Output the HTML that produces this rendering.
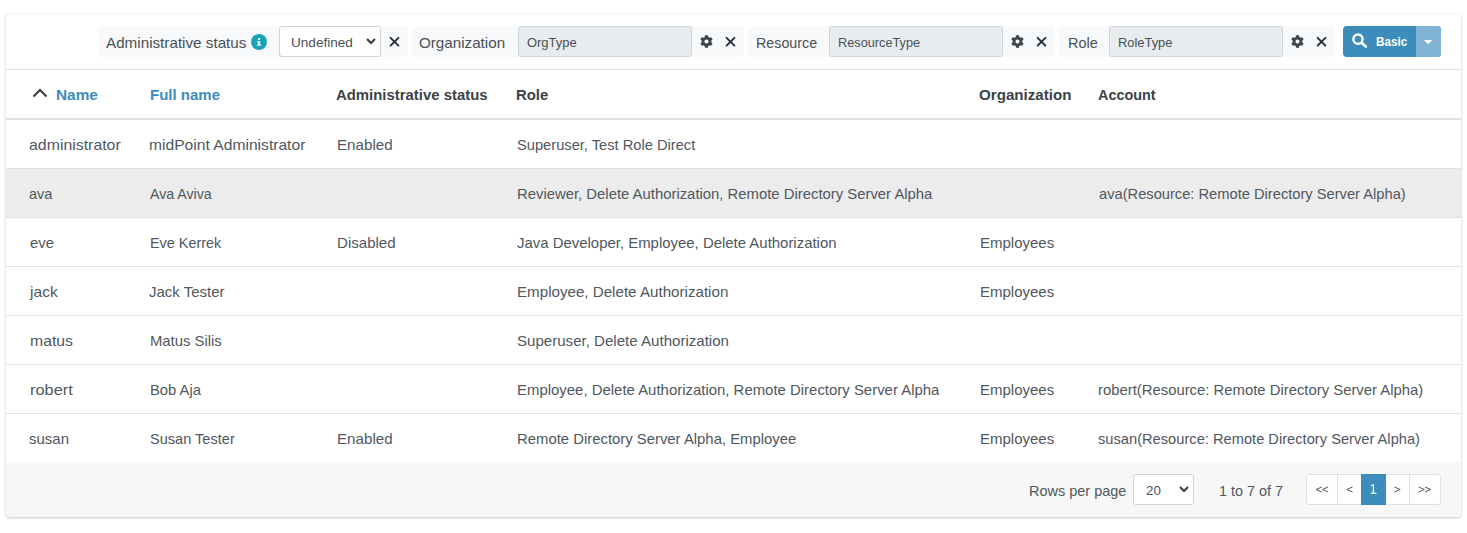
<!DOCTYPE html>
<html><head><meta charset="utf-8">
<style>
*{box-sizing:border-box;margin:0;padding:0}
html,body{width:1467px;height:533px;overflow:hidden;background:#fff;font-family:"Liberation Sans",sans-serif;}
.a{position:absolute;white-space:nowrap;transform-origin:0 0}
#card{position:absolute;left:6px;top:14px;width:1455px;height:503px;background:#fff;border-radius:4px;box-shadow:0 0 1px rgba(0,0,0,.125),0 1px 3px rgba(0,0,0,.2);overflow:hidden}
.fbox{position:absolute;top:26px;height:31px;background:#f8f9fa;border-radius:4px}
.lbl{font-size:15px;color:#495057;line-height:20px;top:32px}
.inp{position:absolute;top:26px;height:31px;background:#e9ecef;border:1px solid #ced4da;border-radius:3px}
.inpt{font-size:13px;color:#495057;line-height:18px;top:33px}
.hdr{font-size:15px;font-weight:bold;color:#3b4248;line-height:20px;top:84px}
.lnk{color:#3c8dbc}
.hl{position:absolute;left:6px;width:1455px;height:1px;background:#dee2e6}
.cell{font-size:15px;color:#50575e;line-height:20px}
svg{position:absolute;overflow:visible}
.btn{font-size:13.5px;font-weight:bold;color:#fff;line-height:20px}
</style></head><body>
<div id="card"></div>
<!-- filter bar -->
<div class="fbox" style="left:99px;width:309px"></div>
<svg style="left:251px;top:34px" width="16" height="16" viewBox="0 0 16 16"><circle cx="8" cy="8" r="8" fill="#17a2b8"/><rect x="7" y="4.1" width="2.2" height="1.9" rx="0.5" fill="#fff"/><path d="M6 7.2H9.2V10.5H10.2V11.8H5.9V10.5H7.3V8.5H6Z" fill="#fff"/></svg>
<div class="a" style="left:279px;top:26px;width:102px;height:31px;background:#fff;border:1px solid #ced4da;border-radius:3px"></div>
<svg style="left:366px;top:38px" width="10" height="7" viewBox="0 0 10 7"><path d="M1 1l4 4 4-4" fill="none" stroke="#3b4148" stroke-width="2.2"/></svg>
<svg style="left:389px;top:36px" width="11" height="11" viewBox="0 0 11 11"><path d="M1.6 1.8L9.4 9.6M9.4 1.8L1.6 9.6" fill="none" stroke="#1f2d3d" stroke-width="1.9" stroke-linecap="round"/></svg>

<div class="fbox" style="left:412px;width:332px"></div>
<div class="inp" style="left:518px;width:174px"></div>
<svg class="gear" style="left:700px;top:34.7px" width="13" height="13" viewBox="0 0 512 512"><path fill="#40464c" d="M487.4 315.7l-42.6-24.6c4.3-23.2 4.3-47 0-70.2l42.6-24.6c4.9-2.8 7.1-8.6 5.5-14-11.1-35.6-30-67.8-54.7-94.6-3.8-4.1-10-5.1-14.8-2.3L380.8 110c-17.9-15.4-38.5-27.3-60.8-35.1V25.8c0-5.6-3.9-10.5-9.4-11.7-36.7-8.2-74.3-7.8-109.2 0-5.5 1.2-9.4 6.1-9.4 11.7V75c-22.2 7.9-42.8 19.8-60.8 35.1L88.7 85.5c-4.9-2.8-11-1.9-14.8 2.3-24.7 26.7-43.6 58.9-54.7 94.6-1.7 5.4.6 11.2 5.5 14L67.3 221c-4.3 23.2-4.3 47 0 70.2l-42.6 24.6c-4.9 2.8-7.1 8.6-5.5 14 11.1 35.6 30 67.8 54.7 94.6 3.8 4.1 10 5.1 14.8 2.3l42.6-24.6c17.9 15.4 38.5 27.3 60.8 35.1v49.2c0 5.6 3.9 10.5 9.4 11.7 36.7 8.2 74.3 7.8 109.2 0 5.5-1.2 9.4-6.1 9.4-11.7v-49.2c22.2-7.9 42.8-19.8 60.8-35.1l42.6 24.6c4.9 2.8 11 1.9 14.8-2.3 24.7-26.7 43.6-58.9 54.7-94.6 1.5-5.5-.7-11.3-5.6-14.1zM256 336c-44.1 0-80-35.9-80-80s35.9-80 80-80 80 35.9 80 80-35.9 80-80 80z"/></svg>
<svg style="left:725px;top:36px" width="11" height="11" viewBox="0 0 11 11"><path d="M1.6 1.8L9.4 9.6M9.4 1.8L1.6 9.6" fill="none" stroke="#1f2d3d" stroke-width="1.9" stroke-linecap="round"/></svg>

<div class="fbox" style="left:748px;width:307px"></div>
<div class="inp" style="left:829px;width:174px"></div>
<svg style="left:1011px;top:34.7px" width="13" height="13" viewBox="0 0 512 512"><path fill="#40464c" d="M487.4 315.7l-42.6-24.6c4.3-23.2 4.3-47 0-70.2l42.6-24.6c4.9-2.8 7.1-8.6 5.5-14-11.1-35.6-30-67.8-54.7-94.6-3.8-4.1-10-5.1-14.8-2.3L380.8 110c-17.9-15.4-38.5-27.3-60.8-35.1V25.8c0-5.6-3.9-10.5-9.4-11.7-36.7-8.2-74.3-7.8-109.2 0-5.5 1.2-9.4 6.1-9.4 11.7V75c-22.2 7.9-42.8 19.8-60.8 35.1L88.7 85.5c-4.9-2.8-11-1.9-14.8 2.3-24.7 26.7-43.6 58.9-54.7 94.6-1.7 5.4.6 11.2 5.5 14L67.3 221c-4.3 23.2-4.3 47 0 70.2l-42.6 24.6c-4.9 2.8-7.1 8.6-5.5 14 11.1 35.6 30 67.8 54.7 94.6 3.8 4.1 10 5.1 14.8 2.3l42.6-24.6c17.9 15.4 38.5 27.3 60.8 35.1v49.2c0 5.6 3.9 10.5 9.4 11.7 36.7 8.2 74.3 7.8 109.2 0 5.5-1.2 9.4-6.1 9.4-11.7v-49.2c22.2-7.9 42.8-19.8 60.8-35.1l42.6 24.6c4.9 2.8 11 1.9 14.8-2.3 24.7-26.7 43.6-58.9 54.7-94.6 1.5-5.5-.7-11.3-5.6-14.1zM256 336c-44.1 0-80-35.9-80-80s35.9-80 80-80 80 35.9 80 80-35.9 80-80 80z"/></svg>
<svg style="left:1036px;top:36px" width="11" height="11" viewBox="0 0 11 11"><path d="M1.6 1.8L9.4 9.6M9.4 1.8L1.6 9.6" fill="none" stroke="#1f2d3d" stroke-width="1.9" stroke-linecap="round"/></svg>

<div class="fbox" style="left:1059px;width:276px"></div>
<div class="inp" style="left:1109px;width:174px"></div>
<svg style="left:1291px;top:34.7px" width="13" height="13" viewBox="0 0 512 512"><path fill="#40464c" d="M487.4 315.7l-42.6-24.6c4.3-23.2 4.3-47 0-70.2l42.6-24.6c4.9-2.8 7.1-8.6 5.5-14-11.1-35.6-30-67.8-54.7-94.6-3.8-4.1-10-5.1-14.8-2.3L380.8 110c-17.9-15.4-38.5-27.3-60.8-35.1V25.8c0-5.6-3.9-10.5-9.4-11.7-36.7-8.2-74.3-7.8-109.2 0-5.5 1.2-9.4 6.1-9.4 11.7V75c-22.2 7.9-42.8 19.8-60.8 35.1L88.7 85.5c-4.9-2.8-11-1.9-14.8 2.3-24.7 26.7-43.6 58.9-54.7 94.6-1.7 5.4.6 11.2 5.5 14L67.3 221c-4.3 23.2-4.3 47 0 70.2l-42.6 24.6c-4.9 2.8-7.1 8.6-5.5 14 11.1 35.6 30 67.8 54.7 94.6 3.8 4.1 10 5.1 14.8 2.3l42.6-24.6c17.9 15.4 38.5 27.3 60.8 35.1v49.2c0 5.6 3.9 10.5 9.4 11.7 36.7 8.2 74.3 7.8 109.2 0 5.5-1.2 9.4-6.1 9.4-11.7v-49.2c22.2-7.9 42.8-19.8 60.8-35.1l42.6 24.6c4.9 2.8 11 1.9 14.8-2.3 24.7-26.7 43.6-58.9 54.7-94.6 1.5-5.5-.7-11.3-5.6-14.1zM256 336c-44.1 0-80-35.9-80-80s35.9-80 80-80 80 35.9 80 80-35.9 80-80 80z"/></svg>
<svg style="left:1316px;top:36px" width="11" height="11" viewBox="0 0 11 11"><path d="M1.6 1.8L9.4 9.6M9.4 1.8L1.6 9.6" fill="none" stroke="#1f2d3d" stroke-width="1.9" stroke-linecap="round"/></svg>

<div class="a" style="left:1343px;top:26px;width:98px;height:31px;background:#3c8dbc;border-radius:4px;overflow:hidden"><div style="position:absolute;left:73px;top:0;width:25px;height:31px;background:#80b3d4"></div></div>
<svg style="left:1352px;top:33px" width="16" height="15" viewBox="0 0 16 15"><circle cx="6" cy="6.2" r="4.6" fill="none" stroke="#fff" stroke-width="2.5"/><path d="M9.5 9.8L13.8 13.6" stroke="#fff" stroke-width="2.7" stroke-linecap="round"/></svg>
<svg style="left:1423.8px;top:39.8px" width="9" height="5" viewBox="0 0 9 5"><path d="M0 0H8.2L4.1 4.2Z" fill="#fff"/></svg>

<div class="hl" style="top:69px;background:#dfdfdf"></div>

<!-- header -->
<svg style="left:32px;top:88px" width="16" height="10" viewBox="0 0 16 10"><path d="M1.5 8.5l6.5-6.5 6.5 6.5" fill="none" stroke="#343a40" stroke-width="2"/></svg>
<div class="hl" style="top:118px;height:2px"></div>

<!-- rows -->
<div class="a" style="left:6px;top:169px;width:1455px;height:48px;background:#ececec"></div>
<div class="hl" style="top:168px"></div>
<div class="hl" style="top:217px"></div>
<div class="hl" style="top:266px"></div>
<div class="hl" style="top:315px"></div>
<div class="hl" style="top:364px"></div>
<div class="hl" style="top:413px"></div>


<!-- footer -->
<div class="a" style="left:6px;top:462px;width:1455px;height:55px;background:#f7f7f7;border-radius:0 0 4px 4px"></div>
<div class="a" style="left:1133px;top:474px;width:61px;height:31px;background:#fff;border:1px solid #ced4da;border-radius:3px"></div>
<svg style="left:1179px;top:486px" width="10" height="7" viewBox="0 0 10 7"><path d="M1 1l4 4 4-4" fill="none" stroke="#3b4148" stroke-width="2.2"/></svg>
<div class="a" style="left:1306px;top:474px;width:135px;height:31px;background:#fff;border:1px solid #dee2e6;border-radius:3px"></div>
<div class="a" style="left:1337px;top:474px;width:1px;height:31px;background:#dee2e6"></div>
<div class="a" style="left:1409px;top:474px;width:1px;height:31px;background:#dee2e6"></div>
<div class="a" style="left:1361px;top:474px;width:25px;height:31px;background:#3c8dbc"></div>
<svg style="left:1306px;top:474px" width="135" height="31" viewBox="0 0 135 31"><g fill="none" stroke="#495057" stroke-width="0.95" stroke-linejoin="miter">
<path d="M15.8 13L10 15.5L15.8 18M22.2 13L16.4 15.5L22.2 18"/>
<path d="M46.6 13L40.8 15.5L46.6 18"/>
<path d="M88.4 13L94.2 15.5L88.4 18"/>
<path d="M112.6 13L118.4 15.5L112.6 18M119 13L124.8 15.5L119 18"/>
</g><path d="M65.2 11.6L67.4 10.9V19.2M64.8 19.3H70.4" fill="none" stroke="#fff" stroke-width="1.3"/></svg>

<div id="t0" class="a lbl" style="left:106.25px;top:33px;transform:scaleX(1.0145)">Administrative status</div>
<div id="t1" class="a inpt" style="left:291.21px;top:34px;transform:scaleX(1.0432)">Undefined</div>
<div id="t2" class="a lbl" style="left:419.49px;top:33px;transform:scaleX(1.0122)">Organization</div>
<div id="t3" class="a inpt" style="left:526.50px;top:34px;transform:scaleX(0.9950)">OrgType</div>
<div id="t4" class="a lbl" style="left:756.05px;top:33px;transform:scaleX(0.9524)">Resource</div>
<div id="t5" class="a inpt" style="left:838.02px;top:34px;transform:scaleX(0.9788)">ResourceType</div>
<div id="t6" class="a lbl" style="left:1067.55px;top:33px;transform:scaleX(0.9669)">Role</div>
<div id="t7" class="a inpt" style="left:1117.74px;top:34px;transform:scaleX(0.9913)">RoleType</div>
<div id="t8" class="a btn" style="left:1376.13px;top:32px;transform:scaleX(0.8685)">Basic</div>
<div id="t9" class="a hdr lnk" style="left:56.49px;top:85px;transform:scaleX(1.0257)">Name</div>
<div id="t10" class="a hdr lnk" style="left:149.50px;top:85px;transform:scaleX(1.0002)">Full name</div>
<div id="t11" class="a hdr" style="left:335.99px;top:85px;transform:scaleX(0.9935)">Administrative status</div>
<div id="t12" class="a hdr" style="left:516.49px;top:85px;transform:scaleX(0.9930)">Role</div>
<div id="t13" class="a hdr" style="left:978.99px;top:85px;transform:scaleX(1.0085)">Organization</div>
<div id="t14" class="a hdr" style="left:1098.49px;top:85px;transform:scaleX(0.9586)">Account</div>
<div id="t15" class="a cell" style="left:28.94px;top:135px;transform:scaleX(1.0581)">administrator</div>
<div id="t16" class="a cell" style="left:149.46px;top:135px;transform:scaleX(1.0420)">midPoint Administrator</div>
<div id="t17" class="a cell" style="left:336.73px;top:135px;transform:scaleX(1.0098)">Enabled</div>
<div id="t18" class="a cell" style="left:516.52px;top:135px;transform:scaleX(0.9779)">Superuser, Test Role Direct</div>
<div id="t19" class="a cell" style="left:29.33px;top:184px;transform:scaleX(0.9695)">ava</div>
<div id="t20" class="a cell" style="left:149.76px;top:184px;transform:scaleX(0.9433)">Ava Aviva</div>
<div id="t21" class="a cell" style="left:517.26px;top:184px;transform:scaleX(0.9905)">Reviewer, Delete Authorization, Remote Directory Server Alpha</div>
<div id="t22" class="a cell" style="left:1098.77px;top:184px;transform:scaleX(0.9784)">ava(Resource: Remote Directory Server Alpha)</div>
<div id="t23" class="a cell" style="left:29.73px;top:233px;transform:scaleX(0.9913)">eve</div>
<div id="t24" class="a cell" style="left:149.54px;top:233px;transform:scaleX(0.9591)">Eve Kerrek</div>
<div id="t25" class="a cell" style="left:336.75px;top:233px;transform:scaleX(1.0045)">Disabled</div>
<div id="t26" class="a cell" style="left:517.00px;top:233px;transform:scaleX(0.9953)">Java Developer, Employee, Delete Authorization</div>
<div id="t27" class="a cell" style="left:979.51px;top:233px;transform:scaleX(1.0002)">Employees</div>
<div id="t28" class="a cell" style="left:30.00px;top:282px;transform:scaleX(1.0387)">jack</div>
<div id="t29" class="a cell" style="left:149.49px;top:282px;transform:scaleX(1.0002)">Jack Tester</div>
<div id="t30" class="a cell" style="left:516.99px;top:282px;transform:scaleX(1.0096)">Employee, Delete Authorization</div>
<div id="t31" class="a cell" style="left:979.51px;top:282px;transform:scaleX(1.0002)">Employees</div>
<div id="t32" class="a cell" style="left:29.69px;top:331px;transform:scaleX(1.0520)">matus</div>
<div id="t33" class="a cell" style="left:149.51px;top:331px;transform:scaleX(0.9895)">Matus Silis</div>
<div id="t34" class="a cell" style="left:517.00px;top:331px;transform:scaleX(1.0048)">Superuser, Delete Authorization</div>
<div id="t35" class="a cell" style="left:29.65px;top:380px;transform:scaleX(1.0928)">robert</div>
<div id="t36" class="a cell" style="left:149.51px;top:380px;transform:scaleX(0.9856)">Bob Aja</div>
<div id="t37" class="a cell" style="left:517.00px;top:380px;transform:scaleX(0.9953)">Employee, Delete Authorization, Remote Directory Server Alpha</div>
<div id="t38" class="a cell" style="left:979.51px;top:380px;transform:scaleX(1.0002)">Employees</div>
<div id="t39" class="a cell" style="left:1098.26px;top:380px;transform:scaleX(0.9901)">robert(Resource: Remote Directory Server Alpha)</div>
<div id="t40" class="a cell" style="left:29.24px;top:429px;transform:scaleX(1.0005)">susan</div>
<div id="t41" class="a cell" style="left:149.52px;top:429px;transform:scaleX(0.9710)">Susan Tester</div>
<div id="t42" class="a cell" style="left:336.73px;top:429px;transform:scaleX(1.0098)">Enabled</div>
<div id="t43" class="a cell" style="left:517.01px;top:429px;transform:scaleX(0.9911)">Remote Directory Server Alpha, Employee</div>
<div id="t44" class="a cell" style="left:979.51px;top:429px;transform:scaleX(1.0002)">Employees</div>
<div id="t45" class="a cell" style="left:1098.27px;top:429px;transform:scaleX(0.9778)">susan(Resource: Remote Directory Server Alpha)</div>
<div id="t46" class="a cell" style="left:1028.54px;top:481px;transform:scaleX(0.9648)">Rows per page</div>
<div id="t47" class="a inpt" style="left:1145.64px;top:482px;transform:scaleX(1.0255)">20</div>
<div id="t48" class="a cell" style="left:1218.54px;top:481px;transform:scaleX(0.9579)">1 to 7 of 7</div>
</body></html>
